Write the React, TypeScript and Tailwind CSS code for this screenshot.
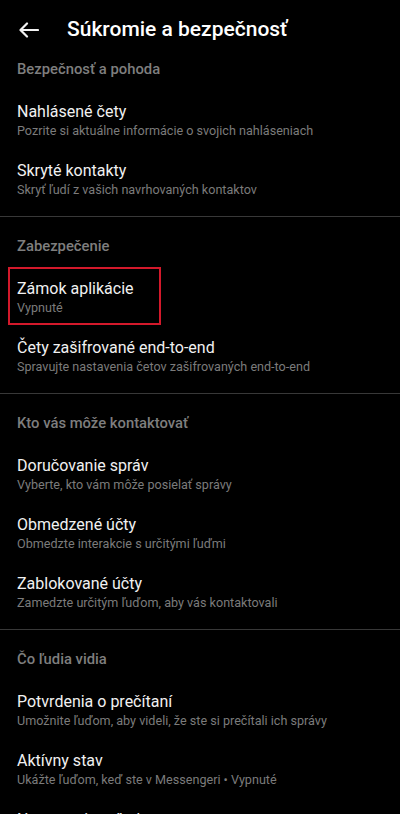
import React from 'react';

type Item = { title: string; subtitle: string; highlight?: boolean };
type Section = { header: string; items: Item[] };

const sections: Section[] = [
  {
    header: 'Bezpečnosť a pohoda',
    items: [
      { title: 'Nahlásené čety', subtitle: 'Pozrite si aktuálne informácie o svojich nahláseniach' },
      { title: 'Skryté kontakty', subtitle: 'Skryť ľudí z vašich navrhovaných kontaktov' },
    ],
  },
  {
    header: 'Zabezpečenie',
    items: [
      { title: 'Zámok aplikácie', subtitle: 'Vypnuté', highlight: true },
      { title: 'Čety zašifrované end-to-end', subtitle: 'Spravujte nastavenia četov zašifrovaných end-to-end' },
    ],
  },
  {
    header: 'Kto vás môže kontaktovať',
    items: [
      { title: 'Doručovanie správ', subtitle: 'Vyberte, kto vám môže posielať správy' },
      { title: 'Obmedzené účty', subtitle: 'Obmedzte interakcie s určitými ľuďmi' },
      { title: 'Zablokované účty', subtitle: 'Zamedzte určitým ľuďom, aby vás kontaktovali' },
    ],
  },
  {
    header: 'Čo ľudia vidia',
    items: [
      { title: 'Potvrdenia o prečítaní', subtitle: 'Umožnite ľuďom, aby videli, že ste si prečítali ich správy' },
      { title: 'Aktívny stav', subtitle: 'Ukážte ľuďom, keď ste v Messengeri • Vypnuté' },
      { title: 'Nastavenia príbehov', subtitle: 'Vyberte, kto môže vidieť vaše príbehy' },
    ],
  },
];

const BackArrow = () => (
  <svg width="20" height="16" viewBox="0 0 20 16" fill="none" stroke="#f2f2f2" strokeWidth="2.2" strokeLinecap="round" strokeLinejoin="round">
    <path d="M19 8H2" />
    <path d="M8 1.5L1.5 8L8 14.5" />
  </svg>
);

const Row = ({ item }: { item: Item }) => (
  <div className="relative px-[17px] pt-3 pb-[9px]">
    {item.highlight && (
      <div className="absolute left-[8px] top-[0px] h-[58px] w-[153px] border-2 border-[#d3192b]" />
    )}
    <div className="text-[16px] leading-5 text-[#f1f1f1] whitespace-nowrap">{item.title}</div>
    <div className="text-[12.6px] leading-[18px] text-[#7b7b7b] whitespace-nowrap">{item.subtitle}</div>
  </div>
);

export default function App() {
  return (
    <div className="h-[814px] w-[400px] overflow-hidden bg-black font-['Roboto','Liberation_Sans',sans-serif]">
      <div className="flex h-[49px] items-center pt-[10px]">
        <div className="ml-[19px] flex w-[48px] items-center">
          <BackArrow />
        </div>
        <h1 className="text-[21px] font-medium text-white">Súkromie a bezpečnosť</h1>
      </div>
      {sections.map((section, i) => (
        <div key={section.header}>
          {i > 0 && <div className="h-px bg-[#383838]" />}
          <div
            className={`px-[17px] ${i === 0 ? 'pt-[10px]' : 'pt-[19px]'} pb-[11px] text-[14.8px] font-medium leading-5 text-[#7e7e7e]`}
          >
            {section.header}
          </div>
          <div className="pb-2">
            {section.items.map((item) => (
              <Row key={item.title} item={item} />
            ))}
          </div>
        </div>
      ))}
    </div>
  );
}
